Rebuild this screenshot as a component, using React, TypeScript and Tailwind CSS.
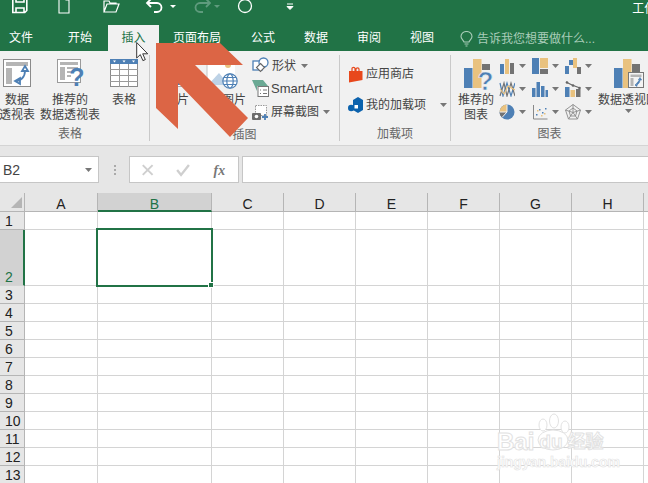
import React from 'react';

const cjk = "font-['Liberation_Sans','Noto_Sans_CJK_SC',sans-serif]";
const BLUE = '#4e80b5';
const TAN = '#e9c27f';
const GRAY = '#737373';

const TABS = [
  { label: '文件', cls: 'w-[42px]' },
  { label: '开始', cls: 'w-[48px] ml-[14px]' },
  { label: '插入', cls: 'w-[51px] ml-[4px] bg-[#f1f1f1] text-[#217346]' },
  { label: '页面布局', cls: 'w-[64px] ml-[6px]' },
  { label: '公式', cls: 'w-[48px] ml-[10px]' },
  { label: '数据', cls: 'w-[48px] ml-[5px]' },
  { label: '审阅', cls: 'w-[48px] ml-[5px]' },
  { label: '视图', cls: 'w-[48px] ml-[5px]' },
];

const COLS = ['A', 'B', 'C', 'D', 'E', 'F', 'G', 'H', 'I'];
const ROWS = [1, 2, 3, 4, 5, 6, 7, 8, 9, 10, 11, 12, 13];

function Caret({ className = '' }: { className?: string }) {
  return (
    <svg width="7" height="4" viewBox="0 0 7 4" className={className}>
      <path d="M0 0h7L3.5 4z" fill="#777" />
    </svg>
  );
}

function BigButton({ width, lines, icon, caret }: { width: string; lines: string[]; icon: React.ReactNode; caret?: boolean }) {
  return (
    <div className={`${width} flex shrink-0 flex-col items-center pt-[8px]`}>
      <div className="flex h-[28px] items-start justify-center">{icon}</div>
      <div className="mt-[6px] flex flex-col items-center whitespace-nowrap text-[12px] leading-[15px] text-[#444]">
        {lines.map(l => <span key={l}>{l}</span>)}
      </div>
      {caret && <Caret className="mt-[1px]" />}
    </div>
  );
}

function GroupLabel({ children, className = '' }: { children: React.ReactNode; className?: string }) {
  return <div className={`h-[22px] shrink-0 text-center text-[12px] leading-[23px] text-[#666] ${className}`}>{children}</div>;
}

function Separator() {
  return <div className="my-[4px] w-px shrink-0 bg-[#c9c9c9]" />;
}

function PivotIcon() {
  return (
    <svg width="28" height="28" viewBox="0 0 28 28">
      <rect x="0.5" y="0.5" width="27" height="27" fill="#fff" stroke="#8a8a8a" />
      <rect x="3" y="3" width="22" height="4" fill="#b5b5b5" />
      <rect x="3" y="9" width="6" height="16" fill="#b5b5b5" />
      <path d="M12 22c6 0 10-4 10-10M22 7l3 5h-6zM12 22l5-3v6z" fill="none" stroke={BLUE} strokeWidth="1.8" />
    </svg>
  );
}

function RecommendIcon() {
  return (
    <svg width="29" height="28" viewBox="0 0 29 28">
      <rect x="0.5" y="0.5" width="23" height="23" fill="#fff" stroke="#9a9a9a" />
      <rect x="3" y="3" width="18" height="3" fill="#b5b5b5" />
      <rect x="3" y="8" width="5" height="13" fill="#b5b5b5" />
      <path d="M10 9h11M10 13h6M10 17h4" stroke="#b5b5b5" strokeWidth="2" />
      <text x="20" y="27" textAnchor="middle" fontSize="25" fontWeight="700" fontFamily="Liberation Sans" fill={BLUE}>?</text>
    </svg>
  );
}

function TableIcon() {
  return (
    <svg width="28" height="28" viewBox="0 0 28 28">
      <rect x="0.5" y="0.5" width="27" height="27" fill="#fff" stroke="#8a8a8a" />
      <rect x="0" y="0" width="28" height="5" fill={BLUE} />
      <path d="M9.5 5v23M18.5 5v23M0 10.5h28M0 16.5h28M0 22.5h28" stroke="#9a9a9a" />
      <path d="M3 1.5h3L4.5 3.5zM12.5 1.5h3L14 3.5zM22 1.5h3l-1.5 2z" fill="#fff" />
    </svg>
  );
}

function PictureIcon() {
  return (
    <svg width="28" height="28" viewBox="0 0 28 28">
      <rect x="0.5" y="0.5" width="27" height="27" fill="#fff" stroke="#aaa" />
      <circle cx="20" cy="6" r="3" fill={TAN} />
      <path d="M2 24l9-11 9 11z" fill="#b9cfe4" />
      <rect x="2" y="24" width="24" height="2" fill={BLUE} />
    </svg>
  );
}

function OnlinePictureIcon() {
  return (
    <svg width="32" height="30" viewBox="0 0 32 30">
      <rect x="1" y="0" width="28" height="26" fill="#fff" />
      <path d="M1 0v26" stroke="#c4c4c4" />
      <circle cx="22" cy="6" r="3" fill={TAN} />
      <path d="M2 26l11-12 10 12z" fill="#bdd2e6" />
      <g fill="#fff" stroke={BLUE} strokeWidth="1.2">
        <circle cx="24" cy="22" r="7.2" />
        <ellipse cx="24" cy="22" rx="3.2" ry="7.2" />
        <path d="M17 22h14M18 18.5h12M18 25.5h12" />
      </g>
    </svg>
  );
}

function ShapesIcon() {
  return (
    <svg width="17" height="17" viewBox="0 0 17 17">
      <rect x="1" y="4" width="9" height="9" fill="#fff" stroke={BLUE} strokeWidth="1.3" />
      <circle cx="11.5" cy="5.5" r="4.5" fill="#fff" stroke={BLUE} strokeWidth="1.3" />
      <path d="M8.5 6.5l4 4-4 4-4-4z" fill="#fff" stroke="#666" strokeWidth="1.1" />
    </svg>
  );
}

function SmartArtIcon() {
  return (
    <svg width="17" height="17" viewBox="0 0 17 17">
      <path d="M0 0h11l5 6H5v5z" fill="#6aa994" />
      <rect x="6" y="6.5" width="10.5" height="10" fill="#fff" stroke="#777" />
      <path d="M8 10h1M11 10h4M8 13.5h1M11 13.5h4" stroke="#777" />
    </svg>
  );
}

function ScreenshotIcon() {
  return (
    <svg width="17" height="17" viewBox="0 0 17 17">
      <rect x="3.5" y="1.5" width="11" height="10" fill="#fff" stroke="#999" strokeDasharray="1.5 1" />
      <rect x="0" y="9" width="9" height="7" rx="1" fill="#6d6d6d" />
      <circle cx="4.5" cy="12.5" r="1.8" fill="#fff" />
      <path d="M13 10v6M10 13h6" stroke={BLUE} strokeWidth="1.8" />
    </svg>
  );
}

function StoreIcon() {
  return (
    <svg width="15" height="17" viewBox="0 0 15 17">
      <path d="M1 5h13.5v9L1 16.5z" fill="#e8481c" />
      <path d="M4 6V2.5C4 1 7 1 7 2.5V5M8 5V3c0-1.5 3-1.5 3 0v2" fill="none" stroke="#e8481c" strokeWidth="1.2" />
    </svg>
  );
}

function AddinIcon() {
  return (
    <svg width="15" height="17" viewBox="0 0 15 17">
      <path d="M5 3l5-3 5 3v10l-5 3-5-3z" fill="#0b62ad" />
      <circle cx="3.2" cy="11" r="3.2" fill="#0b62ad" />
      <rect x="6.5" y="8" width="3.5" height="3.5" fill="#fff" />
    </svg>
  );
}

function RecommendChartIcon() {
  return (
    <svg width="30" height="32" viewBox="0 0 30 32">
      <rect x="0" y="9" width="8.5" height="20" fill={BLUE} />
      <rect x="9" y="0" width="8.5" height="29" fill={TAN} />
      <rect x="18" y="5" width="8" height="6" fill={GRAY} />
      <text x="21.5" y="31" textAnchor="middle" fontSize="26" fontWeight="700" fontFamily="Liberation Sans" fill={BLUE} stroke="#f1f1f1" strokeWidth="0.6">?</text>
    </svg>
  );
}

function PivotChartIcon() {
  return (
    <svg width="30" height="32" viewBox="0 0 30 32">
      <rect x="0" y="9" width="8.5" height="20" fill={BLUE} />
      <rect x="9" y="0" width="8.5" height="29" fill={TAN} />
      <rect x="18" y="5" width="8" height="24" fill={GRAY} />
      <rect x="14.5" y="13.5" width="15" height="15" fill="#f4f4f4" stroke="#777" />
      <rect x="16.5" y="15.5" width="11" height="2.5" fill="#b5b5b5" />
      <rect x="16.5" y="19" width="3" height="8" fill="#b5b5b5" />
      <path d="M21 26c3 0 5-2 5-6M26 18.5l1.6 2.5h-3.2zM21 26l2-1.4v2.8z" fill={BLUE} stroke={BLUE} strokeWidth="0.7" />
    </svg>
  );
}

// the nine small chart buttons
const CHART_ICONS: React.ReactNode[][] = [
  [
    <g key="a">
      <rect x="1" y="6" width="4" height="10" fill={BLUE} /><rect x="6" y="1" width="4" height="15" fill={TAN} /><rect x="11" y="5" width="4" height="11" fill={GRAY} />
    </g>,
    <g key="b" fill="none" strokeWidth="1.2">
      <path d="M1 2l3 13 4-13 4 13 4-13" stroke={BLUE} /><path d="M1 15l4-13 3 13 4-13 4 13" stroke={GRAY} />
      <path d="M1 8l4 5 4-8 7 4" stroke={TAN} />
    </g>,
    <g key="c">
      <circle cx="8" cy="8" r="7.5" fill={BLUE} /><path d="M8 8V.5A7.5 7.5 0 0 0 .5 8z" fill={TAN} /><path d="M8 8H.5A7.5 7.5 0 0 0 3 13.5z" fill={GRAY} />
      <path d="M8 .5V8H.5M8 8l-5 5.5" stroke="#f1f1f1" fill="none" />
    </g>,
  ],
  [
    <g key="a">
      <rect x="0" y="0" width="7" height="16" fill={BLUE} /><rect x="8" y="0" width="8" height="10" fill={TAN} /><rect x="8" y="11" width="8" height="5" fill={GRAY} />
    </g>,
    <g key="b">
      <rect x="0" y="7" width="3.5" height="9" fill={BLUE} /><rect x="4.5" y="1" width="3.5" height="15" fill={BLUE} /><rect x="9" y="5" width="3.5" height="11" fill={BLUE} /><rect x="13.5" y="9" width="2.5" height="7" fill={BLUE} />
    </g>,
    <g key="c">
      <path d="M1.5 1v14h14" stroke="#888" fill="none" />
      <path d="M4 10h1.5v1.5H4zM7 5h1.5v1.5H7zM10 8h1.5v1.5H10zM13 4h1.5v1.5H13z" fill={BLUE} />
      <path d="M5 6h1.5v1.5H5zM9 11h1.5v1.5H9zM12 9h1.5v1.5H12z" fill={TAN} />
    </g>,
  ],
  [
    <g key="a">
      <rect x="0" y="8" width="4" height="8" fill={BLUE} /><rect x="4" y="2" width="4" height="5" fill={BLUE} /><rect x="8" y="0" width="4" height="10" fill={TAN} /><rect x="12" y="9" width="4" height="7" fill={GRAY} />
    </g>,
    <g key="b">
      <rect x="0" y="6" width="4.5" height="10" fill={BLUE} /><rect x="5.5" y="9" width="4.5" height="7" fill={TAN} /><rect x="11" y="8" width="4.5" height="8" fill={GRAY} />
      <path d="M1 1l6 3 8 3" stroke="#666" strokeWidth="1.2" fill="none" /><circle cx="2" cy="1.5" r="1.3" fill="#666" /><circle cx="8" cy="4.5" r="1.3" fill="#666" /><circle cx="14.5" cy="7" r="1.3" fill="#666" />
    </g>,
    <g key="c" fill="none" stroke="#8a8a8a" strokeWidth="0.9">
      <path d="M8 .5l7.5 5.5-3 9h-9l-3-9z" /><path d="M8 4l4 3-1.5 5h-5L4 7z" /><path d="M8 .5v8M15.5 6L8 8.5M12.5 15L8 8.5M3.5 15L8 8.5M.5 6L8 8.5" />
    </g>,
  ],
];

function Watermark() {
  return (
    <div className="pointer-events-none absolute left-[497px] top-[220px] flex h-[60px] w-[120px] flex-col items-start font-['Liberation_Sans','Noto_Sans_CJK_SC',sans-serif] text-white">
      <svg width="40" height="40" viewBox="0 0 40 40" className="absolute left-[38px] top-0">
        <g fill="#fff" stroke="#e2e2e2">
          <ellipse cx="8" cy="12" rx="4" ry="6" />
          <ellipse cx="19" cy="8" rx="4.5" ry="7" />
          <ellipse cx="30" cy="14" rx="4" ry="6" />
          <ellipse cx="18" cy="27" rx="15" ry="10" />
        </g>
      </svg>
      <div className="relative mt-[17px] flex items-center text-[24px] font-bold leading-[24px] [-webkit-text-stroke:1px_#e2e2e2]">
        <span>Bai</span>
        <span className="ml-[5px] text-[19px]">du</span>
        <span className="ml-[5px] text-[18px]">经验</span>
      </div>
      <div className="relative mt-[1px] text-[14px] font-bold leading-[15px] [-webkit-text-stroke:0.6px_#e2e2e2]">jingyan.baidu.com</div>
    </div>
  );
}

export default function App() {
  return (
    <div className={`relative h-[483px] w-[648px] overflow-hidden bg-white ${cjk}`}>
      {/* Title bar */}
      <div className="relative flex h-[25px] items-start overflow-hidden bg-[#217346]">
        <svg width="300" height="16" viewBox="0 0 300 16" className="shrink-0" fill="none" stroke="#fff" strokeWidth="1.6">
          <path d="M12.8 -3h14v13.5l-2 2h-12zM16 -3v5h8v-5M16 13V8h8v5" />
          <path d="M59 -3h10v16h-10zM66 -3v3h3" strokeWidth="1.1" />
          <path d="M104 12l3-8h12l-3 8zM104 12V1h5l1 2h6v1" fill="none" strokeWidth="1.2" />
          <path d="M148 3h9a4.5 4.5 0 0 1 0 9h-3M151 -1l-4 4 4 4" strokeWidth="1.8" />
          <path d="M170 5h6l-3 3z" fill="#fff" stroke="none" />
          <path d="M209 3h-9a4.5 4.5 0 0 0 0 9h3M206 -1l4 4-4 4" stroke="#5f9b7d" strokeWidth="1.8" />
          <path d="M214 5h6l-3 3z" fill="#5f9b7d" stroke="none" />
          <circle cx="245" cy="6" r="6.5" strokeWidth="1.3" />
          <path d="M287 4h6M287 6.5h6l-3 3z" fill="#fff" strokeWidth="1" />
        </svg>
        <span className="ml-auto mr-[-27px] mt-[2px] whitespace-nowrap text-[12px] leading-[14px] text-white">工作簿1</span>
      </div>

      {/* Tabs */}
      <div className="flex h-[26px] items-stretch bg-[#217346] text-[12px] text-white">
        {TABS.map(t => (
          <div key={t.label} className={`flex shrink-0 items-center justify-center pb-[1px] ${t.cls}`}>{t.label}</div>
        ))}
        <div className="ml-[14px] flex items-center gap-[4px] pt-[1px] text-[#a9cdb9]">
          <svg width="13" height="16" viewBox="0 0 13 16" fill="none" stroke="#a9cdb9" strokeWidth="1.1">
            <path d="M4 11C3.5 9 1 8 1 5.5a5.5 5 0 0 1 11 0C12 8 9.5 9 9 11zM4.5 13h4M5.5 15h2" />
          </svg>
          <span className="whitespace-nowrap">告诉我您想要做什么...</span>
        </div>
      </div>

      {/* Ribbon */}
      <div className="flex h-[94px] bg-[#f1f1f1]">
        <div className="flex w-[149px] shrink-0 flex-col">
          <div className="flex flex-1 pl-0">
            <div className="ml-[-6px] flex">
              <BigButton width="w-[46px]" lines={['数据', '透视表']} icon={<PivotIcon />} />
              <BigButton width="w-[60px]" lines={['推荐的', '数据透视表']} icon={<div className="pl-[3px]"><RecommendIcon /></div>} />
              <div className="ml-[4px]">
                <BigButton width="w-[40px]" lines={['表格']} icon={<TableIcon />} />
              </div>
            </div>
          </div>
          <GroupLabel className="pr-[9px]">表格</GroupLabel>
        </div>
        <Separator />
        <div className="flex w-[189px] shrink-0 flex-col">
          <div className="flex flex-1">
            <div className="ml-[7px]">
              <BigButton width="w-[40px]" lines={['图片']} icon={<PictureIcon />} />
            </div>
            <div className="ml-[1px]">
              <BigButton width="w-[48px]" lines={['联机图片']} icon={<OnlinePictureIcon />} />
            </div>
            <div className="ml-[6px] flex flex-col pt-[3px] text-[12px] text-[#444]">
              <div className="flex h-[23px] items-center gap-[3px]"><ShapesIcon /><span>形状</span><Caret className="ml-[2px]" /></div>
              <div className="flex h-[23px] items-center gap-[2px]"><SmartArtIcon /><span className="text-[13px]">SmartArt</span></div>
              <div className="flex h-[24px] items-center gap-[2px]"><ScreenshotIcon /><span className="whitespace-nowrap">屏幕截图</span><Caret className="ml-[2px]" /></div>
            </div>
          </div>
          <GroupLabel>插图</GroupLabel>
        </div>
        <Separator />
        <div className="flex w-[110px] shrink-0 flex-col">
          <div className="flex flex-1 flex-col gap-[11px] pl-[8px] pt-[13px] text-[12px] text-[#444]">
            <div className="flex h-[20px] items-center gap-[3px]"><StoreIcon /><span>应用商店</span></div>
            <div className="flex h-[20px] items-center gap-[3px]"><AddinIcon /><span>我的加载项</span><Caret className="ml-[11px]" /></div>
          </div>
          <GroupLabel>加载项</GroupLabel>
        </div>
        <Separator />
        <div className="flex w-[197px] shrink-0 flex-col">
          <div className="flex flex-1">
            <div className="ml-[5px]">
              <BigButton width="w-[40px]" lines={['推荐的', '图表']} icon={<div className="pl-[6px]"><RecommendChartIcon /></div>} />
            </div>
            <div className="ml-[3px] flex pt-[3px]">
              {CHART_ICONS.map((col, i) => (
                <div key={i} className="flex w-[33px] flex-col">
                  {col.map((icon, j) => (
                    <div key={j} className="flex h-[23px] items-center gap-[4px]">
                      <svg width="16" height="16" viewBox="0 0 16 16">{icon}</svg>
                      <Caret />
                    </div>
                  ))}
                </div>
              ))}
            </div>
            <BigButton width="w-[60px]" lines={['数据透视图']} icon={<div className="pl-[2px]"><PivotChartIcon /></div>} caret />
          </div>
          <GroupLabel>图表</GroupLabel>
        </div>
      </div>

      {/* Formula bar */}
      <div className="flex h-[48px] items-start border-t border-[#d4d4d4] bg-[#e6e6e6] pt-[10px]">
        <div className="flex h-[27px] w-[99px] shrink-0 items-center justify-between border border-l-0 border-[#c6c6c6] bg-white pl-[3px] pr-[6px] text-[14px] text-[#444]">
          <span className="pt-[2px]">B2</span>
          <Caret />
        </div>
        <div className="flex h-[27px] w-[30px] shrink-0 flex-col items-center justify-center gap-[2px] pl-[1px]">
          <span className="h-[2px] w-[2px] bg-[#aaa]" />
          <span className="h-[2px] w-[2px] bg-[#aaa]" />
          <span className="h-[2px] w-[2px] bg-[#aaa]" />
        </div>
        <div className="flex h-[27px] w-[110px] shrink-0 items-center border border-[#c6c6c6] bg-white">
          <svg width="110" height="16" viewBox="0 0 110 16" fill="none">
            <path d="M13 3l10 10M23 3L13 13" stroke="#cfcfcf" strokeWidth="2" />
            <path d="M48 8l4 5 8-10" stroke="#cfcfcf" strokeWidth="2.4" />
            <text x="91" y="13" textAnchor="middle" fontSize="14" fontStyle="italic" fontWeight="700" fontFamily="Liberation Serif" fill="#777">fx</text>
          </svg>
        </div>
        <div className="ml-[3px] h-[27px] flex-1 border border-r-0 border-[#c6c6c6] bg-white" />
      </div>

      {/* Sheet */}
      <div className="relative">
        <div className="grid grid-cols-[25px_73px_114px_repeat(7,72px)] grid-rows-[19px_18px_56px_repeat(11,18px)] font-['Liberation_Sans',sans-serif]">
          <div className="relative border-b border-r border-[#b5b5b5] bg-[#e6e6e6]">
            <svg width="11" height="11" viewBox="0 0 11 11" className="absolute left-[11px] top-[4px]">
              <path d="M11 0v11H0z" fill="#b5b5b5" />
            </svg>
          </div>
          {COLS.map(c => (
            <div
              key={c}
              className={
                c === 'B'
                  ? 'border-b-2 border-r border-[#217346] border-r-[#b5b5b5] bg-[#d2d2d2] text-center text-[14px] leading-[22px] text-[#217346]'
                  : 'border-b border-r border-[#b5b5b5] bg-[#e6e6e6] text-center text-[14px] leading-[22px] text-[#222]'
              }
            >
              {c}
            </div>
          ))}
          {ROWS.map(r => (
            <React.Fragment key={r}>
              <div
                className={
                  r === 2
                    ? 'flex items-end border-b border-r-2 border-[#d4d4d4] border-r-[#217346] bg-[#d2d2d2] pl-[5px] text-[14px] leading-[15px] text-[#217346]'
                    : 'flex items-end border-b border-r border-[#b5b5b5] bg-[#e6e6e6] pl-[5px] text-[14px] leading-[15px] text-[#222]'
                }
              >
                {r}
              </div>
              {COLS.map(c => (
                <div key={c} className={`relative border-b border-r border-[#d4d4d4] bg-white ${r === 2 && c === 'B' ? 'z-10' : ''}`}>
                  {r === 2 && c === 'B' && (
                    <div className="absolute inset-[-2px] border-2 border-[#217346]">
                      <span className="absolute bottom-[-3px] right-[-3px] h-[6px] w-[6px] border border-white bg-[#217346]" />
                    </div>
                  )}
                </div>
              ))}
            </React.Fragment>
          ))}
        </div>
        <Watermark />
      </div>

      {/* Big annotation arrow on top of the ribbon */}
      <svg width="648" height="483" viewBox="0 0 648 483" className="pointer-events-none absolute left-0 top-0">
        <path d="M156 43H220L243 65H195L248 118L230 137L178 83V129L156 108Z" fill="#dc6545" />
        <path d="M136.7 42.5V58l3.6-3.4 2.6 6 2.4-1-2.6-5.8h5z" fill="#fff" stroke="#222" strokeWidth="0.9" />
      </svg>
    </div>
  );
}
